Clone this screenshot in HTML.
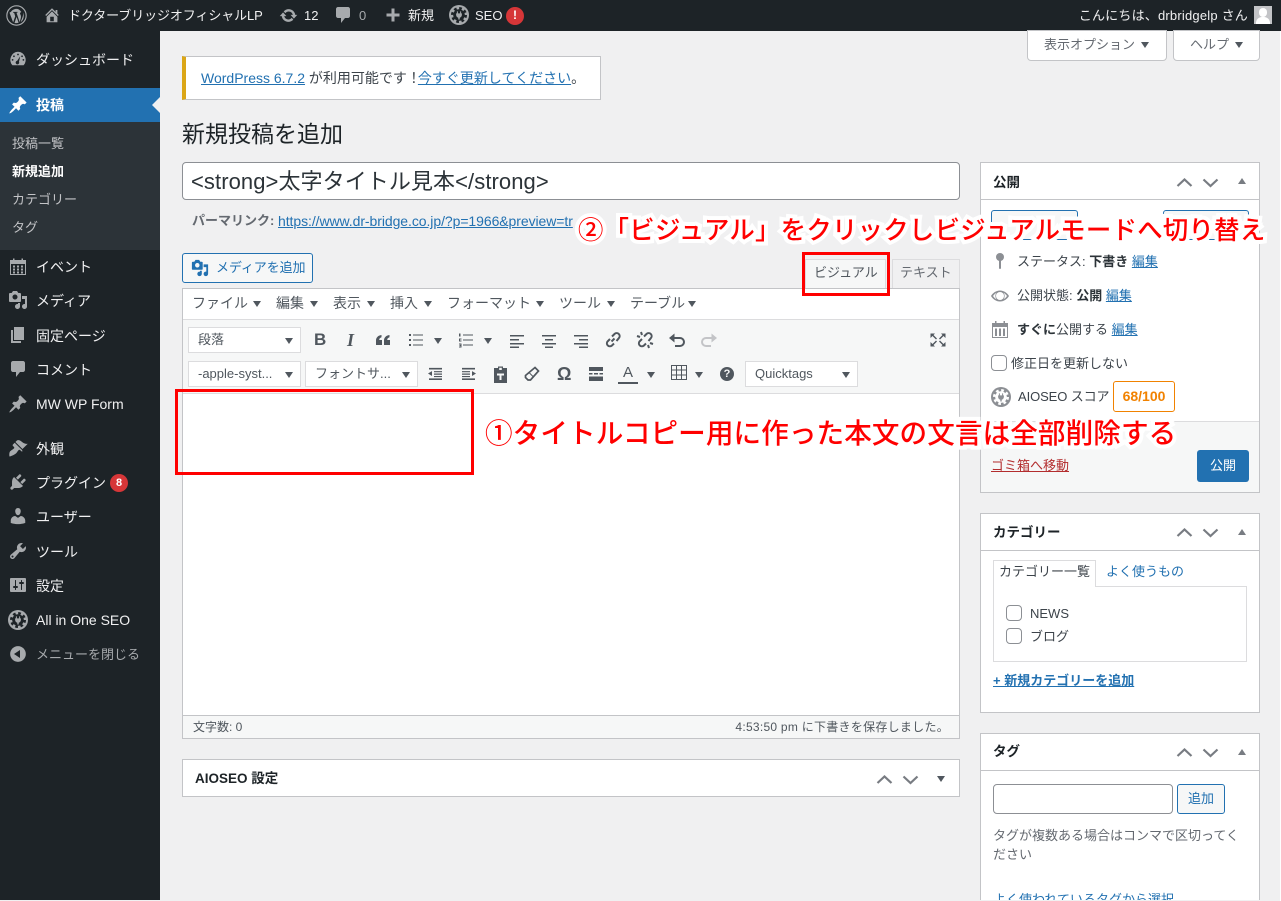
<!DOCTYPE html>
<html lang="ja"><head><meta charset="utf-8"><title>新規投稿を追加</title>
<style>
*{box-sizing:border-box}
html,body{margin:0;padding:0;width:1281px;height:901px;overflow:hidden;background:#f0f0f1;font-family:"Liberation Sans","Noto Sans CJK JP",sans-serif;color:#3c434a;font-size:13px}
#p{position:relative;width:1281px;height:901px;overflow:hidden;background:#f0f0f1}
.a{position:absolute}
.t{position:absolute;white-space:nowrap;line-height:20px;margin-top:1px}
a,.l{color:#2271b1;text-decoration:underline}
svg{position:absolute;display:block}
.m{color:#f0f0f1;font-size:14px}
.s{font-size:13px;color:#c3c4c7}
.w{background:#fff;border:1px solid #c3c4c7}
.sel{position:absolute;background:#fff;border:1px solid #dcdcde;height:26px;line-height:24px;padding-left:9px;font-size:13px;color:#50575e;white-space:nowrap}
.sel:after,.ar:after{content:"";position:absolute;border-left:4.5px solid transparent;border-right:4.5px solid transparent;border-top:6px solid #50575e}
.sel:after{right:7px;top:10px}
.ar{position:absolute;width:9px;height:6px}
.ar:after{left:0;top:0}
.mn{position:absolute;top:293px;font-size:14px;line-height:20px;color:#50575e;white-space:nowrap}
.b{position:absolute;font-weight:700;font-size:13.5px;color:#1d2327;line-height:20px;white-space:nowrap;margin-top:1px}
.note{position:absolute;white-space:nowrap;color:#f00;font-weight:500;-webkit-text-stroke:8px #fff;paint-order:stroke fill;line-height:34px}
.box{position:absolute;border:3px solid #f00}
.cb{position:absolute;width:16px;height:16px;background:#fff;border:1px solid #8c8f94;border-radius:4px}
.tri{position:absolute;border-left:4px solid transparent;border-right:4px solid transparent;border-bottom:6px solid #787c82}
</style></head><body><div id="p">
<svg width="0" height="0" style="position:absolute"><defs>
<symbol id="pin" viewBox="0 0 20 20"><path d="M10.440 3.020l1.820-1.820 6.360 6.350-1.830 1.820c-1.050-.68-2.480-.57-3.410.36l-.75.75c-.92.93-1.040 2.350-.35 3.410l-1.830 1.820-2.410-2.410-2.800 2.790c-.42.42-3.380 2.710-3.800 2.290s1.860-3.390 2.280-3.810l2.790-2.790L4.100 9.360l1.830-1.820c1.050.69 2.480.57 3.400-.36l.75-.75c.93-.92 1.050-2.350.36-3.410z"/></symbol>
<symbol id="seo" viewBox="0 0 20 20"><circle cx="10" cy="10" r="10"/><circle cx="10" cy="10" r="5.800" style="fill:var(--h)"/><circle cx="10" cy="10" r="6.800" fill="none" style="stroke:var(--h)" stroke-width="2.400" stroke-dasharray="2.700 2.640"/><path d="M7.900 6.400h1v2h2.200v-2h1v2h.8v1.400c0 1.600-1 2.700-2.200 3V14.500H9.300v-1.700c-1.200-.3-2.200-1.400-2.200-3V8.400h.8z"/></symbol>
<symbol id="chev" viewBox="0 0 74 16"><path d="M2.500 12L9.500 5.500 16.500 12M28.500 5.500L35.500 12 42.500 5.500" fill="none" stroke="currentColor" stroke-width="2.200"/></symbol>
</defs></svg>

<!-- admin bar -->
<div class="a" style="left:0;top:0;width:1281px;height:31px;background:#1d2327"></div>
<svg style="left:6px;top:5px" width="21" height="21" viewBox="0 0 20 20"><circle cx="10" cy="10" r="9.200" fill="none" stroke="#a7aaad" stroke-width="1.100"/><path fill="#a7aaad" d="M3.300 7.300l3.500 9.300 2-5.900-1.100-3.300-1-.1v-.8h4.300v.8l-1 .1 3 8.900 1-3.300c.6-1.900.2-3.200-.5-4.300-.4-.7 0-1.800 1.100-2C13 4.400 11.600 3.700 10 3.700c-2.200 0-4.200 1.100-5.300 2.900l-1.400.7zM10.100 11.300l-2 5.700c1.300.4 2.700.3 3.900-.1zM16.200 7.100c.4 2.100-.2 3.800-.9 5.600l-1.300 3.600c2.900-1.900 3.600-6 2.200-9.200z"/></svg>
<svg style="left:43px;top:6px" width="18" height="18" viewBox="0 0 20 20" fill="#a7aaad"><path d="M16 8.500l1.530 1.530-1.060 1.060L10 4.620l-6.470 6.470-1.060-1.060L10 2.500l4 4v-2h2v4zm-6-2.460l6 5.990V18H4v-5.970zM12 17v-5H8v5h4z"/></svg>
<div class="t" style="left:68px;top:5px;color:#f0f0f1;font-size:13px;letter-spacing:-.1px">ドクターブリッジオフィシャルLP</div>
<svg style="left:279px;top:6px" width="19" height="19" viewBox="0 0 20 20" fill="#a7aaad"><path d="M10.200 3.280c3.530 0 6.430 2.610 6.920 6h2.080l-3.500 4-3.500-4h2.320c-.45-1.970-2.210-3.440-4.320-3.440-1.450 0-2.730.71-3.540 1.780L4.950 5.660C6.230 4.200 8.110 3.280 10.200 3.280zm-.4 13.440c-3.520 0-6.430-2.610-6.920-6H.8l3.500-4c1.170 1.330 2.330 2.670 3.500 4H5.480c.45 1.970 2.210 3.440 4.320 3.440 1.450 0 2.730-.71 3.540-1.780l1.710 1.950c-1.280 1.460-3.150 2.390-5.250 2.390z"/></svg>
<div class="t" style="left:304px;top:5px;color:#f0f0f1">12</div>
<svg style="left:333px;top:5px" width="20" height="20" viewBox="0 0 20 20" fill="#a7aaad"><path d="M5 2h10c1.100 0 2 .9 2 2v7c0 1.100-.9 2-2 2h-3l-4 5v-5H5c-1.100 0-2-.9-2-2V4c0-1.100.9-2 2-2z"/></svg>
<div class="t" style="left:359px;top:5px;color:#a7aaad">0</div>
<svg style="left:384px;top:6px" width="18" height="18" viewBox="0 0 18 18" fill="#a7aaad"><path d="M7.500 2.500h3v5h5v3h-5v5h-3v-5h-5v-3h5z"/></svg>
<div class="t" style="left:408px;top:5px;color:#f0f0f1">新規</div>
<svg style="left:449px;top:5px;--h:#1d2327" width="20" height="20" fill="#a7aaad"><use href="#seo"/></svg>
<div class="t" style="left:475px;top:5px;color:#f0f0f1">SEO</div>
<div class="a" style="left:506px;top:7px;width:18px;height:18px;border-radius:9px;background:#d63638;color:#fff;text-align:center;font-weight:700;font-size:12px;line-height:17px">!</div>
<div class="t" style="right:33px;top:5px;color:#f0f0f1;letter-spacing:.2px">こんにちは、drbridgelp さん</div>
<div class="a" style="left:1254px;top:6px;width:18px;height:18px;background:#c3c4c7;overflow:hidden"><div class="a" style="left:5px;top:2px;width:8px;height:9px;border-radius:4px;background:#fff"></div><div class="a" style="left:2px;top:11px;width:14px;height:9px;border-radius:6px 6px 0 0;background:#fff"></div></div>

<!-- sidebar -->
<div class="a" style="left:0;top:31px;width:160px;height:870px;background:#1d2327"></div>
<div class="a" style="left:0;top:88px;width:160px;height:34px;background:#2271b1"></div>
<div class="a" style="left:0;top:122px;width:160px;height:128px;background:#2c3338"></div>
<div class="a" style="left:152px;top:97px;border-right:8px solid #f0f0f1;border-top:8px solid transparent;border-bottom:8px solid transparent"></div>

<svg style="left:9px;top:50px" width="18" height="18" viewBox="0 0 20 20" fill="#a7aaad"><path fill-rule="evenodd" d="M3.800 17A9 9 0 0 1 10 2a9 9 0 0 1 6.200 15zM10 4a1 1 0 1 0 0 2a1 1 0 1 0 0-2zM5.500 6a1 1 0 1 0 0 2a1 1 0 1 0 0-2zM14.500 6a1 1 0 1 0 0 2a1 1 0 1 0 0-2zM4 10a1 1 0 1 0 0 2a1 1 0 1 0 0-2zM16 10a1 1 0 1 0 0 2a1 1 0 1 0 0-2zM12.500 7l-3.400 5a2 2 0 1 0 2 1z"/></svg>
<div class="t m" style="left:36px;top:49px">ダッシュボード</div>
<svg style="left:8px;top:95px" width="20" height="20" fill="#fff"><use href="#pin"/></svg>
<div class="t" style="left:36px;top:94px;color:#fff;font-size:14px;font-weight:700">投稿</div>
<div class="t s" style="left:12px;top:133px">投稿一覧</div>
<div class="t" style="left:12px;top:161px;color:#fff;font-weight:700;font-size:13px">新規追加</div>
<div class="t s" style="left:12px;top:189px">カテゴリー</div>
<div class="t s" style="left:12px;top:217px">タグ</div>

<svg style="left:8px;top:256px" width="20" height="20" viewBox="0 0 20 20" fill="#a7aaad"><path fill-rule="evenodd" d="M2 4h3V2.500h1.500V4h7V2.500H15V4h3v15H2zM3 8v10h14V8zM5 9.500h2v2H5zM9 9.500h2v2H9zM13 9.500h2v2h-2zM5 12.500h2v2H5zM9 12.500h2v2H9zM13 12.500h2v2h-2zM5 15.500h2v2H5zM9 15.500h2v2H9zM13 15.500h2v2h-2z"/></svg>
<div class="t m" style="left:36px;top:256px">イベント</div>
<svg style="left:8px;top:290px" width="20" height="20" viewBox="0 0 20 20" fill="#a7aaad"><path d="M13 11V4c0-.55-.45-1-1-1h-1.670L9 1H5L3.670 3H2c-.55 0-1 .45-1 1v7c0 .55.45 1 1 1h10c.55 0 1-.45 1-1zM7 4.500c1.380 0 2.500 1.120 2.500 2.500S8.380 9.500 7 9.500 4.500 8.380 4.500 7 5.620 4.500 7 4.500zM14 6h5v10.500c0 1.380-1.120 2.500-2.500 2.500S14 17.880 14 16.500s1.120-2.500 2.500-2.500c.17 0 .34.02.5.05V9h-3V6zm-4 8.050V13h2v3.500c0 1.380-1.120 2.500-2.500 2.500S7 17.880 7 16.500 8.120 14 9.500 14c.17 0 .34.02.5.05z"/></svg>
<div class="t m" style="left:36px;top:290px">メディア</div>
<svg style="left:8px;top:325px" width="20" height="20" viewBox="0 0 20 20" fill="#a7aaad"><path d="M6 15V2h10v13H6zm-1 1h8v2H3V5h2v11z"/></svg>
<div class="t m" style="left:36px;top:325px">固定ページ</div>
<svg style="left:8px;top:359px" width="20" height="20" viewBox="0 0 20 20" fill="#a7aaad"><path d="M5 2h10c1.100 0 2 .9 2 2v7c0 1.100-.9 2-2 2h-3l-4 5v-5H5c-1.100 0-2-.9-2-2V4c0-1.100.9-2 2-2z"/></svg>
<div class="t m" style="left:36px;top:359px">コメント</div>
<svg style="left:8px;top:394px" width="20" height="20" fill="#a7aaad"><use href="#pin"/></svg>
<div class="t m" style="left:36px;top:393px;font-size:14px">MW WP Form</div>
<svg style="left:8px;top:438px" width="20" height="20" viewBox="0 0 20 20" fill="#a7aaad"><path d="M14.480 11.060L7.410 3.990l1.500-1.500c.5-.56 2.300-.47 3.510.32 1.210.8 1.430 1.280 2.910 2.100 1.180.64 2.450 1.260 4.450.85zm-.71.71L6.700 4.700 4.930 6.470c-.39.39-.39 1.020 0 1.410l1.060 1.060c.39.39.39 1.030 0 1.420-.6.6-1.430 1.110-2.210 1.690-.35.26-.7.53-1.010.84C1.430 13.230.99 16.500 1.500 18.500c2-.4 5.300-1.900 6.660-3.270.31-.31.58-.66.84-1.010.58-.78 1.090-1.610 1.690-2.210.39-.39 1.030-.39 1.420 0l1.060 1.060c.39.39 1.020.39 1.410 0z"/></svg>
<div class="t m" style="left:36px;top:438px">外観</div>
<svg style="left:8px;top:472px" width="20" height="20" viewBox="0 0 20 20" fill="#a7aaad"><path d="M13.110 4.360L9.870 7.600 8 5.730l3.240-3.240c.35-.34 1.050-.2 1.560.32.52.51.66 1.210.31 1.550zm-8 1.770l.91-1.120 9.010 9.010-1.190.84c-.71.71-2.630 1.160-3.820 1.160H6.140L4.900 17.260c-.59.59-1.540.59-2.120 0-.59-.58-.59-1.530 0-2.120l1.240-1.240v-3.880c0-1.130.4-3.190 1.090-3.890zm7.260 3.970l3.240-3.240c.34-.35 1.040-.21 1.550.31.52.51.66 1.210.31 1.550l-3.240 3.250z"/></svg>
<div class="t m" style="left:36px;top:472px">プラグイン</div>
<div class="a" style="left:110px;top:474px;width:18px;height:18px;border-radius:9px;background:#d63638;color:#fff;text-align:center;font-size:11px;font-weight:700;line-height:18px">8</div>
<svg style="left:8px;top:506px" width="20" height="20" viewBox="0 0 20 20" fill="#a7aaad"><path d="M10 9.250c-2.270 0-2.730-3.440-2.730-3.440C7 4.020 7.820 2 9.970 2c2.160 0 2.980 2.020 2.710 3.810 0 0-.41 3.440-2.680 3.440zm0 2.570L12.720 10c2.390 0 4.520 2.330 4.520 4.530v2.490s-3.650 1.130-7.240 1.130c-3.650 0-7.240-1.130-7.240-1.130v-2.490c0-2.250 1.940-4.480 4.470-4.480z"/></svg>
<div class="t m" style="left:36px;top:506px">ユーザー</div>
<svg style="left:8px;top:541px" width="20" height="20" viewBox="0 0 20 20" fill="#a7aaad"><path d="M16.680 9.770c-1.340 1.340-3.300 1.670-4.950.99l-5.410 6.520c-.99.99-2.590.99-3.580 0s-.99-2.590 0-3.570l6.520-5.420c-.68-1.650-.35-3.610.99-4.950 1.280-1.280 3.120-1.620 4.720-1.060l-2.890 2.890 2.820 2.820 2.860-2.870c.53 1.580.18 3.390-1.080 4.650zM3.810 16.210c.4.39 1.040.39 1.430 0 .4-.4.4-1.040 0-1.430-.39-.4-1.030-.4-1.430 0-.39.39-.39 1.030 0 1.430z"/></svg>
<div class="t m" style="left:36px;top:541px">ツール</div>
<svg style="left:8px;top:575px" width="20" height="20" viewBox="0 0 20 20" fill="#a7aaad"><path d="M18 16V4c0-.55-.45-1-1-1H3c-.55 0-1 .45-1 1v12c0 .55.45 1 1 1h14c.55 0 1-.45 1-1zM8 11h1c.55 0 1 .45 1 1s-.45 1-1 1H8v1.500c0 .28-.22.5-.5.5s-.5-.22-.5-.5V13H6c-.55 0-1-.45-1-1s.45-1 1-1h1V5.500c0-.28.22-.5.5-.5s.5.22.5.5V11zm5-2h-1c-.55 0-1-.45-1-1s.45-1 1-1h1V5.500c0-.28.22-.5.5-.5s.5.22.5.5V7h1c.55 0 1 .45 1 1s-.45 1-1 1h-1v5.500c0 .28-.22.5-.5.5s-.5-.22-.5-.5V9z"/></svg>
<div class="t m" style="left:36px;top:575px">設定</div>
<svg style="left:8px;top:610px;--h:#1d2327" width="20" height="20" fill="#a7aaad"><use href="#seo"/></svg>
<div class="t m" style="left:36px;top:609px;font-size:14px">All in One SEO</div>
<svg style="left:8px;top:644px" width="20" height="20" viewBox="0 0 20 20" fill="#a7aaad"><path d="M10 2.160c4.330 0 7.840 3.510 7.840 7.840s-3.510 7.840-7.840 7.840S2.160 14.330 2.160 10 5.670 2.160 10 2.160zM12 14V6l-6 4z"/></svg>
<div class="t" style="left:36px;top:644px;color:#a7aaad;font-size:13px">メニューを閉じる</div>

<!-- screen options -->
<div class="a w" style="left:1027px;top:30px;width:140px;height:31px;border-radius:0 0 4px 4px"></div>
<div class="t" style="left:1044px;top:34px;color:#646970">表示オプション</div>
<div class="ar" style="left:1141px;top:42px"></div>
<div class="a w" style="left:1173px;top:30px;width:87px;height:31px;border-radius:0 0 4px 4px"></div>
<div class="t" style="left:1190px;top:34px;color:#646970">ヘルプ</div>
<div class="ar" style="left:1235px;top:42px"></div>

<!-- notice -->
<div class="a w" style="left:182px;top:56px;width:419px;height:44px;border-left:4px solid #dba617"></div>
<div class="t" style="left:201px;top:67px;font-size:14px;color:#3c434a"><span class="l">WordPress 6.7.2</span> が利用可能です<span style="margin-right:-3px">！</span><span class="l">今すぐ更新してください</span>。</div>

<div class="t" style="left:182px;top:119px;font-size:23px;line-height:28px;color:#1d2327">新規投稿を追加</div>

<!-- title -->
<div class="a" style="left:182px;top:162px;width:778px;height:38px;background:#fff;border:1px solid #8c8f94;border-radius:4px"></div>
<div class="t" style="left:191px;top:168px;font-size:22px;line-height:26px;color:#2c3338;letter-spacing:.08px">&lt;strong&gt;太字タイトル見本&lt;/strong&gt;</div>
<div class="t" style="left:192px;top:210px;font-weight:700;color:#646970;font-size:13px">パーマリンク:</div>
<div class="t" style="left:278px;top:210px;font-size:14px;letter-spacing:-.07px"><span class="l">https://www.dr-bridge.co.jp/?p=1966&amp;preview=tr</span></div>

<!-- media button -->
<div class="a" style="left:182px;top:253px;width:131px;height:30px;border:1px solid #2271b1;border-radius:3px;background:#f6f7f7"></div>
<svg style="left:191px;top:259px" width="18" height="18" viewBox="0 0 20 20" fill="#2271b1"><path d="M13 11V4c0-.55-.45-1-1-1h-1.670L9 1H5L3.670 3H2c-.55 0-1 .45-1 1v7c0 .55.45 1 1 1h10c.55 0 1-.45 1-1zM7 4.500c1.380 0 2.500 1.120 2.500 2.500S8.380 9.500 7 9.500 4.500 8.380 4.500 7 5.620 4.500 7 4.500zM14 6h5v10.500c0 1.380-1.120 2.500-2.500 2.500S14 17.880 14 16.500s1.120-2.500 2.500-2.500c.17 0 .34.02.5.05V9h-3V6zm-4 8.050V13h2v3.500c0 1.380-1.120 2.500-2.500 2.500S7 17.880 7 16.500 8.120 14 9.500 14c.17 0 .34.02.5.05z"/></svg>
<div class="t" style="left:216px;top:257px;color:#2271b1;font-size:13px;letter-spacing:-.1px">メディアを追加</div>

<!-- tabs -->
<div class="a" style="left:805px;top:259px;width:81px;height:30px;background:#f6f7f7;border:1px solid #dcdcde;border-bottom:0"></div>
<div class="t" style="left:814px;top:262px;color:#50575e">ビジュアル</div>
<div class="a" style="left:892px;top:259px;width:68px;height:29px;background:#f0f0f1;border:1px solid #dcdcde;border-bottom:0"></div>
<div class="t" style="left:900px;top:262px;color:#646970">テキスト</div>

<!-- editor -->
<div class="a" style="left:182px;top:288px;width:778px;height:451px;background:#fff;border:1px solid #c3c4c7"></div>
<div class="a" style="left:183px;top:319px;width:776px;height:75px;background:#f6f7f7;border-top:1px solid #dcdcde;border-bottom:1px solid #dcdcde"></div>
<div class="a" style="left:183px;top:715px;width:776px;height:23px;background:#f6f7f7;border-top:1px solid #c3c4c7"></div>
<div class="t" style="left:193px;top:716px;font-size:12px;color:#50575e">文字数: 0</div>
<div class="t" style="right:332px;top:716px;font-size:12px;color:#50575e;letter-spacing:.27px">4:53:50 pm に下書きを保存しました。</div>

<div class="mn" style="left:192px">ファイル</div><div class="ar" style="left:253px;top:301px"></div>
<div class="mn" style="left:276px">編集</div><div class="ar" style="left:310px;top:301px"></div>
<div class="mn" style="left:333px">表示</div><div class="ar" style="left:367px;top:301px"></div>
<div class="mn" style="left:390px">挿入</div><div class="ar" style="left:424px;top:301px"></div>
<div class="mn" style="left:447px">フォーマット</div><div class="ar" style="left:536px;top:301px"></div>
<div class="mn" style="left:559px">ツール</div><div class="ar" style="left:607px;top:301px"></div>
<div class="mn" style="left:630px">テーブル</div><div class="ar" style="left:688px;top:301px"></div>

<div class="sel" style="left:188px;top:327px;width:113px">段落</div>
<div class="sel" style="left:188px;top:361px;width:113px">-apple-syst...</div>
<div class="sel" style="left:305px;top:361px;width:113px">フォントサ...</div>
<div class="sel" style="left:745px;top:361px;width:113px">Quicktags</div>

<div class="t" style="left:314px;top:329px;font-size:17px;font-weight:700;color:#50575e">B</div>
<div class="t" style="left:347px;top:329px;font-size:18px;font-weight:700;font-style:italic;font-family:'Liberation Serif',serif;color:#50575e">I</div>
<svg style="left:375px;top:332px" width="16" height="16" viewBox="0 0 16 16" fill="#50575e"><path d="M1 13V8.500C1 5.500 3 3.500 6.500 3v2.200C5 5.700 4.300 6.500 4.200 8H7v5zM9 13V8.500C9 5.500 11 3.500 14.500 3v2.200C13 5.700 12.300 6.500 12.200 8H15v5z"/></svg>
<svg style="left:408px;top:332px" width="16" height="16" viewBox="0 0 16 16" fill="#50575e"><path d="M1 2h2v2H1zM1 7h2v2H1zM1 12h2v2H1zM5 2.500h10v1H5zM5 7.500h10v1H5zM5 12.500h10v1H5z"/></svg>
<div class="ar" style="left:434px;top:338px"></div>
<svg style="left:458px;top:332px" width="16" height="16" viewBox="0 0 16 16" fill="#50575e"><path d="M1 1.500h1.500v3H1zM1 6.500h2.500v1H2v1h1.500v1H1zM1 11.500h2.500v4H1v-1h1.500v-.5H1.500v-1h1v-.5H1zM5 2.500h10v1H5zM5 7.500h10v1H5zM5 12.500h10v1H5z"/></svg>
<div class="ar" style="left:484px;top:338px"></div>
<svg style="left:509px;top:332px" width="16" height="16" fill="#50575e"><path d="M1 3h14v1.500H1zM1 7h9v1.500H1zM1 11h14v1.500H1zM1 14.500h9V16H1z"/></svg>
<svg style="left:541px;top:332px" width="16" height="16" fill="#50575e"><path d="M1 3h14v1.500H1zM4 7h8v1.500H4zM1 11h14v1.500H1zM4 14.500h8V16H4z"/></svg>
<svg style="left:573px;top:332px" width="16" height="16" fill="#50575e"><path d="M1 3h14v1.500H1zM6 7h9v1.500H6zM1 11h14v1.500H1zM6 14.500h9V16H6z"/></svg>
<svg style="left:604px;top:331px" width="18" height="18" viewBox="0 0 18 18" fill="none" stroke="#50575e" stroke-width="2"><path d="M7.500 10.500l3-3M6 8l-2.500 2.500a3 3 0 0 0 4.200 4.200L10 12.500M8 5.500l2.500-2.500a3 3 0 0 1 4.300 4.200L12.500 10"/></svg>
<svg style="left:636px;top:331px" width="18" height="18" viewBox="0 0 18 18" fill="none" stroke="#50575e" stroke-width="2"><path d="M6 8l-2.500 2.500a3 3 0 0 0 4.200 4.200L10 12.500M8 5.500l2.500-2.500a3 3 0 0 1 4.300 4.200L12.500 10M1 5l3 1M5 1l1 3M17 13l-3-1M13 17l-1-3"/></svg>
<svg style="left:668px;top:331px" width="18" height="18" viewBox="0 0 18 18"><path d="M5 7h7a4 4 0 0 1 0 8H7" fill="none" stroke="#50575e" stroke-width="2"/><path d="M6.500 2.500v9L1 7z" fill="#50575e"/></svg>
<svg style="left:700px;top:331px" width="18" height="18" viewBox="0 0 18 18"><path d="M13 7H6a4 4 0 0 0 0 8h5" fill="none" stroke="#c3c4c7" stroke-width="2"/><path d="M11.500 2.500v9L17 7z" fill="#c3c4c7"/></svg>
<svg style="left:929px;top:331px" width="18" height="18" viewBox="0 0 18 18" fill="#50575e"><path d="M1.500 2.500h4.500L4.500 4l3.500 3.500-1 1L3.500 5 1.500 7zM16.500 2.500V7l-2-2-3.500 3.500-1-1L13.500 4 12 2.500zM1.500 15.500V11l2 2L7 9.500l1 1L4.500 14l1.500 1.500zM16.500 15.500H12l1.500-1.500L10 10.500l1-1 3.500 3.500 2-2z"/></svg>

<svg style="left:427px;top:367px" width="16" height="13" viewBox="0 0 16 16" preserveAspectRatio="none" fill="#50575e"><path d="M2 1h13v2H2zM7 5h8v1.500H7zM7 8h8v1.500H7zM7 11h8v1.500H7zM2 14h13v2H2zM5 5v6L1 8z"/></svg>
<svg style="left:461px;top:367px" width="16" height="13" viewBox="0 0 16 16" preserveAspectRatio="none" fill="#50575e"><path d="M1 1h13v2H1zM1 5h8v1.500H1zM1 8h8v1.500H1zM1 11h8v1.500H1zM1 14h13v2H1zM11 5v6l4-3z"/></svg>
<svg style="left:492px;top:365px" width="17" height="18" viewBox="0 0 17 18" fill="#50575e"><path fill-rule="evenodd" d="M6 1.500h5V3h4v15H2V3h4zM7.200 2.800V5h2.600V2.800zM5 8.500v2h2.500V15h2v-4.500H12v-2z"/></svg>
<svg style="left:524px;top:366px" width="16" height="16" viewBox="0 0 16 16" fill="none" stroke="#50575e" stroke-width="1.700"><path d="M11 1.500l3.500 3.500-8 9H4l-2.500-2.500v-2z"/><path d="M5 6.500l4.500 4.500" stroke-width="1"/></svg>
<div class="t" style="left:557px;top:363px;font-size:18px;font-weight:700;color:#50575e">Ω</div>
<svg style="left:588px;top:366px" width="16" height="16" fill="#50575e"><path d="M1 1h14v4H1zM1 7h3.500v1.500H1zM6 7h4v1.500H6zM11.500 7H15v1.500h-3.500zM1 10.500h14V15H1z"/></svg>
<div class="t" style="left:623px;top:362px;font-size:15px;color:#50575e">A</div>
<div class="a" style="left:618px;top:382px;width:20px;height:2px;background:#50575e"></div>
<div class="ar" style="left:647px;top:372px"></div>
<svg style="left:671px;top:365px" width="17" height="16" fill="none" stroke="#50575e"><path d="M.5.500h15v14H.5zM.5 5h15M.5 10h15M5.500.5v14M10.500.5v14"/></svg>
<div class="ar" style="left:695px;top:372px"></div>
<div class="a" style="left:720px;top:367px;width:14px;height:14px;border-radius:7px;background:#50575e;color:#f6f7f7;font-size:11px;font-weight:700;text-align:center;line-height:14px">?</div>

<!-- aioseo box -->
<div class="a w" style="left:182px;top:759px;width:778px;height:38px"></div>
<div class="b" style="left:195px;top:768px">AIOSEO 設定</div>
<svg style="left:875px;top:771px;color:#787c82" width="74" height="16"><use href="#chev"/></svg>
<div class="ar" style="left:937px;top:776px"></div>

<!-- publish box -->
<div class="a w" style="left:980px;top:162px;width:280px;height:331px"></div>
<div class="a" style="left:981px;top:199px;width:278px;height:1px;background:#c3c4c7"></div>
<div class="a" style="left:981px;top:421px;width:278px;height:71px;background:#f6f7f7;border-top:1px solid #dcdcde"></div>
<div class="b" style="left:993px;top:172px">公開</div>
<svg style="left:1175px;top:174px;color:#787c82" width="74" height="16"><use href="#chev"/></svg>
<div class="tri" style="left:1238px;top:178px"></div>
<div class="a" style="left:991px;top:210px;width:87px;height:30px;border:1px solid #2271b1;border-radius:3px;background:#f6f7f7"></div>
<div class="a" style="left:1163px;top:210px;width:86px;height:30px;border:1px solid #2271b1;border-radius:3px;background:#f6f7f7"></div>

<svg style="left:990px;top:251px" width="20" height="20" viewBox="0 0 20 20" fill="#8c8f94"><circle cx="10" cy="6" r="4"/><rect x="9" y="8" width="2" height="10" rx="1"/></svg>
<div class="t" style="left:1017px;top:251px">ステータス: <b style="color:#2c3338">下書き</b> <span class="l">編集</span></div>
<svg style="left:990px;top:286px" width="20" height="20" viewBox="0 0 20 20" fill="#8c8f94"><path fill-rule="evenodd" d="M10 4.500c4 0 7.300 2.500 9 5.500-1.700 3-5 5.500-9 5.500S2.700 13 1 10c1.700-3 5-5.500 9-5.500zM10 6a4 4 0 1 0 0 8a4 4 0 1 0 0-8zM3 10c1 1.500 2.200 2.600 3.600 3.300A5 5 0 0 1 6.600 6.700 8.500 8.500 0 0 0 3 10zM17 10c-1-1.500-2.200-2.600-3.600-3.300a5 5 0 0 1 0 6.600A8.500 8.500 0 0 0 17 10z"/></svg>
<div class="t" style="left:1017px;top:285px">公開状態: <b style="color:#2c3338">公開</b> <span class="l">編集</span></div>
<svg style="left:990px;top:319px" width="20" height="20" viewBox="0 0 20 20" fill="#8c8f94"><path fill-rule="evenodd" d="M2 4h3V2h1.500v2h7V2H15v2h3v15H2zM3 8v10h14V8zM5 9.500h2V17H5zM9 9.500h2V17H9zM13 9.500h2V17h-2z"/></svg>
<div class="t" style="left:1017px;top:319px"><b style="color:#2c3338">すぐに</b>公開する <span class="l">編集</span></div>
<div class="cb" style="left:991px;top:355px"></div>
<div class="t" style="left:1011px;top:353px">修正日を更新しない</div>
<svg style="left:991px;top:387px;--h:#fff" width="20" height="20" fill="#8c8f94"><use href="#seo"/></svg>
<div class="t" style="left:1018px;top:386px;font-size:13px;letter-spacing:-.1px">AIOSEO スコア</div>
<div class="a" style="left:1113px;top:381px;width:62px;height:31px;border:1px solid #f18200;border-radius:3px;color:#f18200;font-weight:700;font-size:14px;line-height:29px;text-align:center">68/100</div>
<div class="t" style="left:991px;top:455px;color:#b32d2e;text-decoration:underline">ゴミ箱へ移動</div>
<div class="a" style="left:1197px;top:450px;width:52px;height:32px;border-radius:3px;background:#2271b1;color:#fff;text-align:center;line-height:31px">公開</div>

<!-- category -->
<div class="a w" style="left:980px;top:513px;width:280px;height:200px"></div>
<div class="a" style="left:981px;top:550px;width:278px;height:1px;background:#c3c4c7"></div>
<div class="b" style="left:993px;top:522px">カテゴリー</div>
<svg style="left:1175px;top:524px;color:#787c82" width="74" height="16"><use href="#chev"/></svg>
<div class="tri" style="left:1238px;top:529px"></div>
<div class="a" style="left:993px;top:586px;width:254px;height:76px;border:1px solid #dcdcde"></div>
<div class="a" style="left:993px;top:560px;width:103px;height:27px;background:#fff;border:1px solid #dcdcde;border-bottom:0"></div>
<div class="t" style="left:999px;top:561px;color:#3c434a">カテゴリー一覧</div>
<div class="t" style="left:1106px;top:561px;color:#2271b1">よく使うもの</div>
<div class="cb" style="left:1006px;top:605px"></div>
<div class="t" style="left:1030px;top:603px">NEWS</div>
<div class="cb" style="left:1006px;top:628px"></div>
<div class="t" style="left:1030px;top:626px">ブログ</div>
<div class="t" style="left:993px;top:670px;font-weight:700;color:#2271b1;text-decoration:underline">+ 新規カテゴリーを追加</div>

<!-- tags -->
<div class="a w" style="left:980px;top:733px;width:280px;height:175px"></div>
<div class="a" style="left:981px;top:770px;width:278px;height:1px;background:#c3c4c7"></div>
<div class="b" style="left:993px;top:741px">タグ</div>
<svg style="left:1175px;top:744px;color:#787c82" width="74" height="16"><use href="#chev"/></svg>
<div class="tri" style="left:1238px;top:749px"></div>
<div class="a" style="left:993px;top:784px;width:180px;height:30px;background:#fff;border:1px solid #8c8f94;border-radius:4px"></div>
<div class="a" style="left:1177px;top:784px;width:48px;height:30px;background:#f6f7f7;border:1px solid #2271b1;border-radius:3px;color:#2271b1;text-align:center;line-height:28px">追加</div>
<div class="t" style="left:993px;top:825px;color:#646970;line-height:19px;white-space:normal;width:256px">タグが複数ある場合はコンマで区切ってください</div>
<div class="t" style="left:993px;top:889px;color:#2271b1;text-decoration:underline">よく使われているタグから選択</div>
<div class="a" style="left:0;top:900px;width:1281px;height:1px;background:#f0f0f1"></div>
<div class="a" style="left:1280px;top:31px;width:1px;height:870px;background:#fff"></div>

<!-- annotations -->
<div class="box" style="left:175px;top:389px;width:299px;height:86px"></div>
<div class="box" style="left:802px;top:252px;width:88px;height:44px"></div>
<div class="note" style="left:578px;top:214px;font-size:25.4px;letter-spacing:.26px">②「ビジュアル」をクリックしビジュアルモードへ切り替え</div>
<div class="note" style="left:485px;top:417px;font-size:27.6px;letter-spacing:.08px">①タイトルコピー用に作った本文の文言は全部削除する</div>
</div></body></html>
